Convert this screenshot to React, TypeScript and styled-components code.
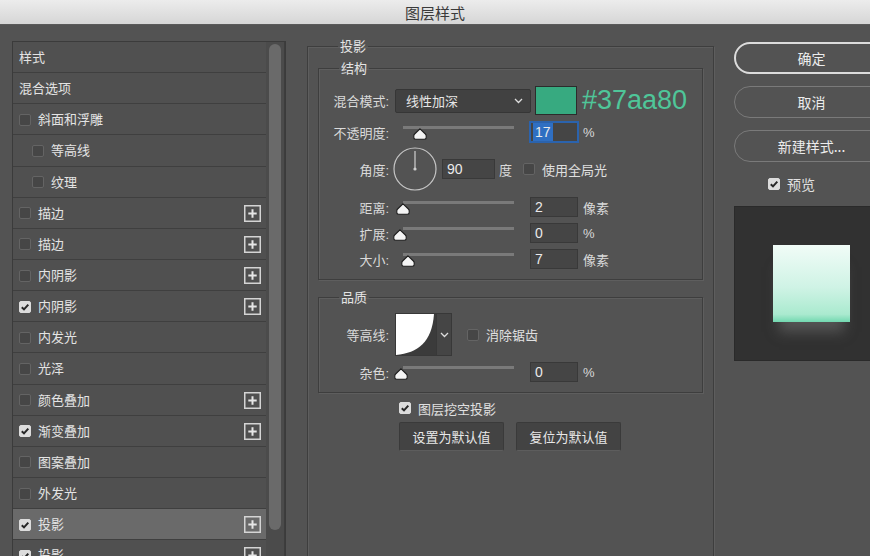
import React from "react";
import styled, { createGlobalStyle } from "styled-components";

const GlobalStyle = createGlobalStyle`
  html, body {
    margin: 0;
    padding: 0;
    background: #535353;
    overflow: hidden;
  }
  body {
    font-family: "Liberation Sans", "Noto Sans CJK SC", sans-serif;
    font-size: 13px;
    color: #e0e0e0;
  }
  * {
    box-sizing: border-box;
  }
`;

const Window = styled.div`
  width: 870px;
  height: 556px;
  overflow: hidden;
  background: #535353;
`;
const TitleBar = styled.div`
  height: 25px;
  display: flex;
  align-items: center;
  justify-content: center;
  background: linear-gradient(#ececec, #d6d6d6);
  border-bottom: 1px solid #5a5a5a;
  font-family: "Noto Sans CJK SC", sans-serif;
  font-size: 15px;
  color: #3a3a3a;
  line-height: 1;
`;
const Body = styled.div`
  display: flex;
  align-items: flex-start;
  padding: 12px 0 0 12px;
`;

/* ---------- left list ---------- */
const LeftPanel = styled.div`
  flex-shrink: 0;
  display: flex;
  width: 274px;
  height: 540px;
  margin-top: 4px;
  border: 1px solid #3b3b3b;
  background: #4a4a4a;
`;
const List = styled.div`
  width: 253px;
  display: flex;
  flex-direction: column;
`;
const Item = styled.div<{ $active?: boolean; $indent?: boolean }>`
  flex-shrink: 0;
  height: 31.15px;
  display: flex;
  align-items: center;
  gap: 7px;
  padding: 1px 5px 0 ${(p) => (p.$indent ? 19 : 6)}px;
  background: ${(p) => (p.$active ? "#6a6a6a" : "#505050")};
  border-bottom: 1px solid #3f3f3f;
  color: #e4e4e4;
  line-height: 1;
`;
const ItemLabel = styled.span`
  flex: 1;
`;
const Track = styled.div`
  width: 19px;
  padding: 2px 0 0 3px;
  background: #4b4b4b;
  border-right: 1px solid #3d3d3d;
`;
const Thumb = styled.div`
  width: 12px;
  height: 486px;
  border-radius: 6px;
  background: #6a6a6a;
`;

/* ---------- checkbox ---------- */
const Box = styled.span<{ $checked?: boolean }>`
  flex-shrink: 0;
  width: 12px;
  height: 12px;
  border-radius: 2px;
  display: inline-flex;
  align-items: center;
  justify-content: center;
  background: ${(p) => (p.$checked ? "#dcdcdc" : "#464646")};
  border: 1px solid ${(p) => (p.$checked ? "#dcdcdc" : "#646464")};
`;

function Check({ checked }: { checked?: boolean }) {
  return (
    <Box $checked={checked}>
      {checked && (
        <svg width="10" height="10" viewBox="0 0 10 10">
          <path d="M1.8 5.2 L4 7.4 L8.3 2.6" fill="none" stroke="#262626" strokeWidth="2" />
        </svg>
      )}
    </Box>
  );
}

function PlusIcon() {
  return (
    <svg width="17" height="17" viewBox="0 0 17 17">
      <rect x="0.75" y="0.75" width="15.5" height="15.5" fill="none" stroke="#d4d4d4" strokeWidth="1.5" />
      <path d="M4.3 8.5 H12.7 M8.5 4.3 V12.7" stroke="#e6e6e6" strokeWidth="2" />
    </svg>
  );
}

function Chevron() {
  return (
    <svg width="9" height="6" viewBox="0 0 9 6">
      <polyline points="1,1 4.5,4.5 8,1" fill="none" stroke="#dedede" strokeWidth="1.3" />
    </svg>
  );
}

/* ---------- middle ---------- */
const Group = styled.fieldset<{ $w: number }>`
  flex-shrink: 0;
  margin: 0;
  min-width: 0;
  width: ${(p) => p.$w}px;
  border: 1px solid #3e3e3e;
  box-shadow: 1px 1px 0 #5e5e5e, inset 1px 1px 0 #5e5e5e;
`;
const Outer = styled(Group)`
  margin-left: 21px;
  height: 540px;
  padding: 4px 10px 0 10px;
`;
const Inner = styled(Group)<{ $mt?: number; $pt?: number }>`
  margin-top: ${(p) => p.$mt ?? 0}px;
  padding: ${(p) => p.$pt ?? 9}px 0 4px 0;
`;
const Legend = styled.legend`
  margin-left: 20px;
  padding: 0 2px;
  height: 18px;
  line-height: 18px;
  font-family: "Noto Sans CJK SC", sans-serif;
  color: #e4e4e4;
`;
const Row = styled.div<{ $h: number; $mt?: number }>`
  display: flex;
  align-items: center;
  height: ${(p) => p.$h}px;
  margin-top: ${(p) => p.$mt ?? 0}px;
`;
const Label = styled.span`
  flex-shrink: 0;
  width: 70px;
  margin-right: 6px;
  text-align: right;
  color: #dadada;
`;
const Select = styled.div`
  width: 136px;
  height: 24px;
  display: flex;
  align-items: center;
  justify-content: space-between;
  padding: 0 7px 0 10px;
  background: #414141;
  border: 1px solid #363636;
  border-radius: 2px;
  color: #e6e6e6;
`;
const Swatch = styled.div<{ $color: string }>`
  width: 42px;
  height: 29px;
  margin-left: 4px;
  background: ${(p) => p.$color};
  border: 1px solid #2c2c2c;
`;
const Hex = styled.span`
  margin-left: 5px;
  font-family: "Liberation Sans", sans-serif;
  font-size: 27px;
  color: #4fc699;
  line-height: 1;
`;
const SliderBox = styled.div`
  position: relative;
  width: 135px;
  height: 20px;
`;
const Rail = styled.div`
  margin: 4px 0 0 8px;
  width: 111px;
  height: 3px;
  background: #7a7a7a;
`;
const Knob = styled.svg<{ $x: number }>`
  position: absolute;
  top: 6px;
  left: ${(p) => p.$x - 7}px;
`;
const Field = styled.div<{ $w: number; $focus?: boolean; $ml?: number }>`
  width: ${(p) => p.$w}px;
  height: 20px;
  margin-left: ${(p) => p.$ml ?? 0}px;
  display: flex;
  align-items: center;
  padding-left: 2px;
  background: #454545;
  border: 1px solid ${(p) => (p.$focus ? "#2b63ad" : "#393939")};
  box-shadow: ${(p) => (p.$focus ? "0 0 0 1px #2b63ad" : "none")};
  color: #eaeaea;
  font-family: "Liberation Sans", sans-serif;
  font-size: 14px;
`;
const Value = styled.span<{ $sel?: boolean }>`
  padding: 1px 2px;
  background: ${(p) => (p.$sel ? "#2f6fc2" : "transparent")};
  line-height: 16px;
`;
const Unit = styled.span<{ $ml?: number }>`
  margin-left: ${(p) => p.$ml ?? 5}px;
  color: #dadada;
`;
const Dial = styled.svg`
  margin-left: -2px;
  flex-shrink: 0;
`;
const ContourBox = styled.div`
  display: flex;
  height: 43px;
  border: 1px solid #383838;
`;
const ContourDrop = styled.div`
  width: 15px;
  display: flex;
  align-items: center;
  justify-content: center;
  background: #454545;
  border-left: 1px solid #383838;
`;
const CheckLabel = styled.label<{ $ml?: number }>`
  display: flex;
  align-items: center;
  gap: 7px;
  margin-left: ${(p) => p.$ml ?? 0}px;
  color: #e0e0e0;
`;
const ButtonRow = styled.div`
  display: flex;
  gap: 12px;
  margin: 4px 0 0 81px;
`;
const FlatButton = styled.button`
  width: 105px;
  height: 29px;
  padding: 0;
  background: #434343;
  border: 1px solid #3a3a3a;
  border-bottom-color: #5d5d5d;
  border-radius: 2px;
  color: #e8e8e8;
  font-family: "Noto Sans CJK SC", sans-serif;
  font-size: 13px;
`;

/* ---------- right ---------- */
const Side = styled.div`
  flex-shrink: 0;
  width: 155px;
  margin: 5px 0 0 20px;
  display: flex;
  flex-direction: column;
  gap: 12px;
`;
const PillButton = styled.button<{ $primary?: boolean }>`
  height: 32px;
  padding: 0;
  background: #535353;
  border: ${(p) => (p.$primary ? "2px solid #dcdcdc" : "1px solid #7a7a7a")};
  border-radius: 16px;
  color: #ececec;
  font-family: "Noto Sans CJK SC", sans-serif;
  font-size: 14px;
`;
const PreviewToggle = styled(CheckLabel)`
  margin: 2px 0 0 34px;
  height: 16px;
  font-size: 14px;
`;
const Preview = styled.div`
  margin-top: 2px;
  height: 155px;
  display: flex;
  align-items: center;
  justify-content: center;
  background: #313131;
  border: 1px solid #2a2a2a;
`;
const Square = styled.div`
  width: 77px;
  height: 77px;
  background: linear-gradient(#f1fcf7 0%, #cff3e5 55%, #aaeacf 90%, #72d8b0 100%);
  box-shadow: 0 16px 12px -6px rgba(120, 120, 120, 0.5);
`;

const LAYERS = [
  { label: "样式", head: true },
  { label: "混合选项", head: true },
  { label: "斜面和浮雕" },
  { label: "等高线", indent: true },
  { label: "纹理", indent: true },
  { label: "描边", plus: true },
  { label: "描边", plus: true },
  { label: "内阴影", plus: true },
  { label: "内阴影", checked: true, plus: true },
  { label: "内发光" },
  { label: "光泽" },
  { label: "颜色叠加", plus: true },
  { label: "渐变叠加", checked: true, plus: true },
  { label: "图案叠加" },
  { label: "外发光" },
  { label: "投影", checked: true, plus: true, active: true },
  { label: "投影", checked: true, plus: true },
];

function Slider({ pos }: { pos: number }) {
  return (
    <SliderBox>
      <Rail />
      <Knob $x={pos} width="14" height="12" viewBox="0 0 14 12">
        <path
          d="M7 0.8 L12.4 6 Q13.2 6.8 13.2 8 L13.2 9.5 Q13.2 11.2 11.5 11.2 L2.5 11.2 Q0.8 11.2 0.8 9.5 L0.8 8 Q0.8 6.8 1.6 6 Z"
          fill="#f4f4f4"
          stroke="#1e1e1e"
          strokeWidth="1.1"
        />
      </Knob>
    </SliderBox>
  );
}

export default function App() {
  return (
    <Window>
      <GlobalStyle />
      <TitleBar>图层样式</TitleBar>
      <Body>
        <LeftPanel>
          <List>
            {LAYERS.map((l, i) => (
              <Item key={i} $active={l.active} $indent={l.indent}>
                {!l.head && <Check checked={l.checked} />}
                <ItemLabel>{l.label}</ItemLabel>
                {l.plus && <PlusIcon />}
              </Item>
            ))}
          </List>
          <Track>
            <Thumb />
          </Track>
        </LeftPanel>

        <Outer $w={407}>
          <Legend>投影</Legend>
          <Inner $w={385}>
            <Legend>结构</Legend>
            <Row $h={29}>
              <Label>混合模式:</Label>
              <Select>
                线性加深
                <Chevron />
              </Select>
              <Swatch $color="#37aa80" />
              <Hex>#37aa80</Hex>
            </Row>
            <Row $h={30} $mt={2}>
              <Label>不透明度:</Label>
              <Slider pos={25} />
              <Field $w={48} $focus>
                <Value $sel>17</Value>
              </Field>
              <Unit>%</Unit>
            </Row>
            <Row $h={44}>
              <Label>角度:</Label>
              <Dial width="44" height="44" viewBox="0 0 44 44">
                <circle cx="22" cy="22" r="21" fill="none" stroke="#c6c6c6" strokeWidth="1.2" />
                <line x1="22" y1="22" x2="22" y2="4" stroke="#d0d0d0" strokeWidth="1.2" />
                <circle cx="22" cy="22" r="1.6" fill="#d0d0d0" />
              </Dial>
              <Field $w={53} $ml={5}>
                <Value>90</Value>
              </Field>
              <Unit $ml={4}>度</Unit>
              <CheckLabel $ml={11}>
                <Check />
                使用全局光
              </CheckLabel>
            </Row>
            <Row $h={32}>
              <Label>距离:</Label>
              <Slider pos={8} />
              <Field $w={48}>
                <Value>2</Value>
              </Field>
              <Unit>像素</Unit>
            </Row>
            <Row $h={20}>
              <Label>扩展:</Label>
              <Slider pos={5} />
              <Field $w={48}>
                <Value>0</Value>
              </Field>
              <Unit>%</Unit>
            </Row>
            <Row $h={32}>
              <Label>大小:</Label>
              <Slider pos={13} />
              <Field $w={48}>
                <Value>7</Value>
              </Field>
              <Unit>像素</Unit>
            </Row>
          </Inner>

          <Inner $w={385} $mt={8} $pt={7}>
            <Legend>品质</Legend>
            <Row $h={43}>
              <Label>等高线:</Label>
              <ContourBox>
                <svg width="40" height="41" viewBox="0 0 40 41">
                  <rect width="40" height="41" fill="#3b3b3b" />
                  <path d="M0 0 H38 C36 28 22 39 0 41 Z" fill="#ffffff" />
                </svg>
                <ContourDrop>
                  <Chevron />
                </ContourDrop>
              </ContourBox>
              <CheckLabel $ml={15}>
                <Check />
                消除锯齿
              </CheckLabel>
            </Row>
            <Row $h={32}>
              <Label>杂色:</Label>
              <Slider pos={6} />
              <Field $w={48}>
                <Value>0</Value>
              </Field>
              <Unit>%</Unit>
            </Row>
          </Inner>

          <Row $h={20} $mt={5}>
            <CheckLabel $ml={81}>
              <Check checked />
              图层挖空投影
            </CheckLabel>
          </Row>
          <ButtonRow>
            <FlatButton>设置为默认值</FlatButton>
            <FlatButton>复位为默认值</FlatButton>
          </ButtonRow>
        </Outer>

        <Side>
          <PillButton $primary>确定</PillButton>
          <PillButton>取消</PillButton>
          <PillButton>新建样式...</PillButton>
          <PreviewToggle>
            <Check checked />
            预览
          </PreviewToggle>
          <Preview>
            <Square />
          </Preview>
        </Side>
      </Body>
    </Window>
  );
}
